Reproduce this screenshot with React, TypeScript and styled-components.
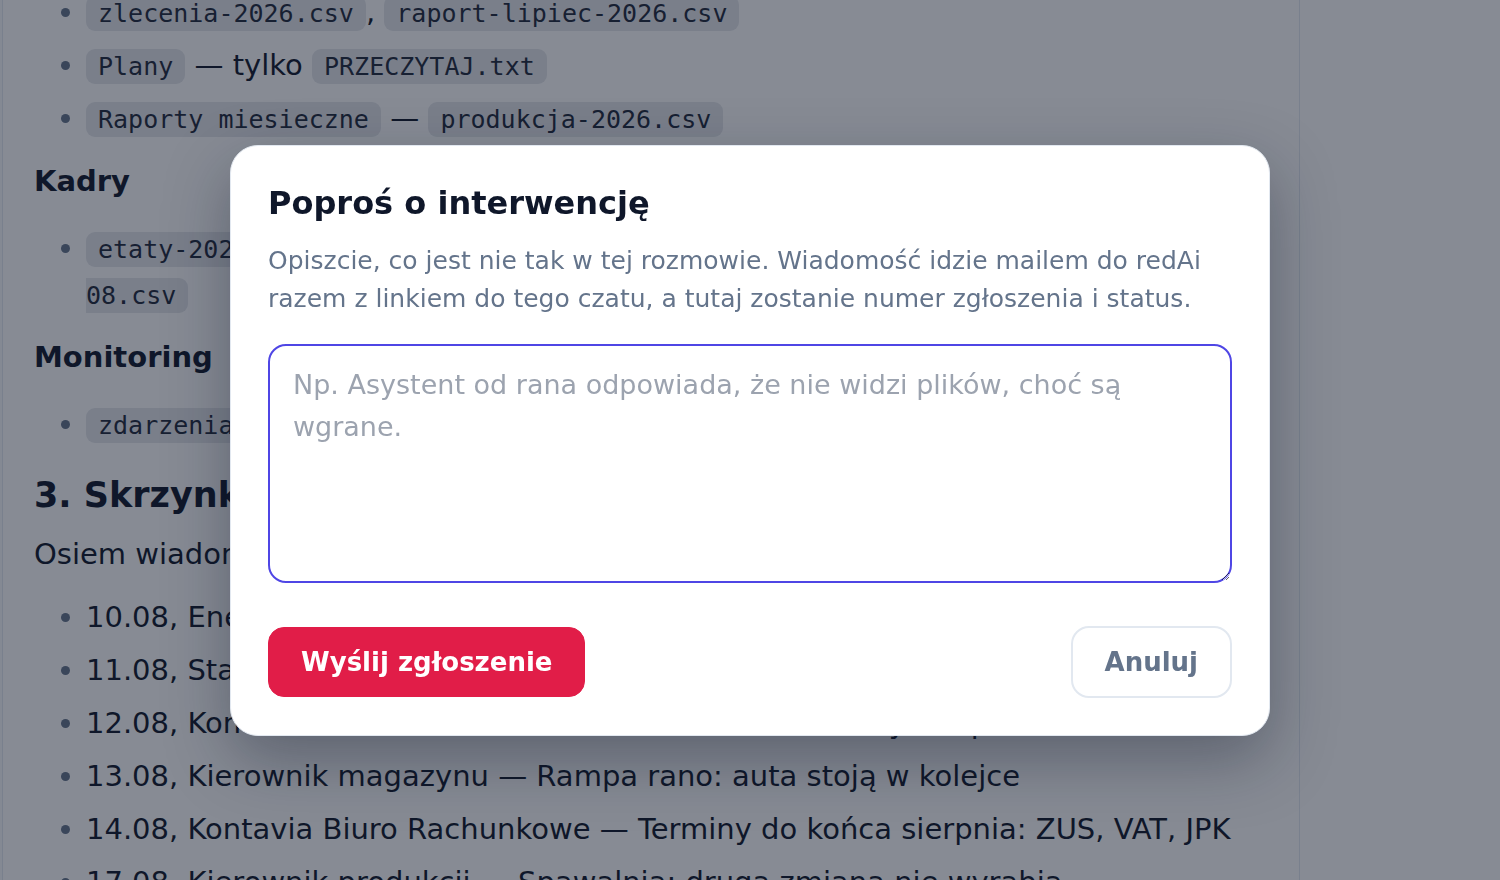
import styled, { createGlobalStyle } from 'styled-components';

const GlobalStyle = createGlobalStyle`
  html, body {
    margin: 0;
    padding: 0;
    height: 100%;
    overflow: hidden;
  }

  body {
    font-family: "DejaVu Sans", "Noto Sans", sans-serif;
    color: #0f172a;
    background: #ffffff;
  }

  * {
    box-sizing: border-box;
  }
`;

const Page = styled.div`
  display: flex;
  height: 100vh;
  overflow: hidden;
`;

const SideStrip = styled.aside`
  width: 3px;
  flex-shrink: 0;
  background: #f8fafc;
  border-right: 1px solid #e2e8f0;
`;

const Main = styled.main`
  flex: 1;
  min-width: 0;
  padding: 0 31px;
  border-right: 1px solid #e2e8f0;
  overflow: hidden;
`;

const RightPanel = styled.aside`
  width: 200px;
  flex-shrink: 0;
  background: #ffffff;
`;

// the document is scrolled a bit, so the first row sits half above the fold
const Article = styled.article`
  margin-top: -11px;
  font-size: 29px;
  line-height: 46px;
`;

const List = styled.ul`
  margin: 0;
  padding-left: 52px;

  li + li {
    margin-top: 7px;
  }

  li::marker {
    color: #64748b;
  }
`;

const Item = styled.li``;

const Code = styled.code`
  font-family: "DejaVu Sans Mono", "Liberation Mono", monospace;
  font-size: 25px;
  line-height: 1;
  color: #1e293b;
  background: #e5e7eb;
  padding: 3px 12px;
  border-radius: 9px;
`;

const SubHeading = styled.h3`
  margin: 22px 0 26px;
  font-size: 29px;
  line-height: 36px;
  font-weight: 700;
`;

const SectionHeading = styled.h2`
  margin: 26px 0 14px;
  font-size: 35px;
  line-height: 44px;
  font-weight: 700;
`;

const Paragraph = styled.p`
  margin: 0 0 17px;
`;

const Overlay = styled.div`
  position: fixed;
  inset: 0;
  display: flex;
  align-items: center;
  justify-content: center;
  background: rgba(15, 23, 42, 0.5);
`;

const Modal = styled.div`
  width: 1040px;
  padding: 37px;
  background: #ffffff;
  border: 1px solid #e2e8f0;
  border-radius: 28px;
  box-shadow: 0 24px 64px rgba(15, 23, 42, 0.35);
`;

const Title = styled.h2`
  margin: 0;
  font-size: 32px;
  line-height: 40px;
  font-weight: 700;
  color: #0f172a;
`;

const Description = styled.p`
  margin: 19px 0 0;
  font-size: 25px;
  line-height: 38px;
  color: #64748b;
`;

const TextArea = styled.textarea`
  display: block;
  width: 100%;
  height: 239px;
  margin-top: 26px;
  padding: 18px 23px;
  font-family: "DejaVu Sans", "Noto Sans", sans-serif;
  font-size: 27px;
  line-height: 42px;
  color: #0f172a;
  border: 2px solid #4f46e5;
  border-radius: 18px;
  outline: none;
  resize: vertical;

  &::placeholder {
    color: #9ca3af;
  }
`;

const Actions = styled.div`
  display: flex;
  align-items: center;
  justify-content: space-between;
  margin-top: 43px;
`;

const Button = styled.button<{ $variant: 'primary' | 'ghost' }>`
  font-family: "DejaVu Sans", "Noto Sans", sans-serif;
  font-size: 26px;
  line-height: 30px;
  font-weight: 700;
  padding: 19px 32px;
  border-radius: ${(p) => (p.$variant === 'primary' ? '16px' : '18px')};
  cursor: pointer;
  background: ${(p) => (p.$variant === 'primary' ? '#e11d48' : '#ffffff')};
  color: ${(p) => (p.$variant === 'primary' ? '#ffffff' : '#64748b')};
  border: ${(p) =>
    p.$variant === 'primary' ? '1px solid #e11d48' : '2px solid #e2e8f0'};
`;

const inbox = [
  '10.08, Energa Obrót — Faktura za energię, lipiec 2026',
  '11.08, Starostwo Powiatowe — Decyzja w sprawie pozwolenia',
  '12.08, Kontrahent Metalex — Zmiana terminów dostawy i to pilne',
  '13.08, Kierownik magazynu — Rampa rano: auta stoją w kolejce',
  '14.08, Kontavia Biuro Rachunkowe — Terminy do końca sierpnia: ZUS, VAT, JPK',
  '17.08, Kierownik produkcji — Spawalnia: druga zmiana nie wyrabia',
];

const App = () => {
  return (
    <>
      <GlobalStyle />
      <Page>
        <SideStrip />
        <Main>
          <Article>
            <List>
              <Item>
                <Code>zlecenia-2026.csv</Code>, <Code>raport-lipiec-2026.csv</Code>
              </Item>
              <Item>
                <Code>Plany</Code> — tylko <Code>PRZECZYTAJ.txt</Code>
              </Item>
              <Item>
                <Code>Raporty miesieczne</Code> — <Code>produkcja-2026.csv</Code>
              </Item>
            </List>

            <SubHeading>Kadry</SubHeading>
            <List>
              <Item>
                <Code>etaty-2026.csv</Code>, <Code>umowy-zlecenia-2026.csv</Code>,{' '}
                <Code>urlopy-2026.csv</Code>,{' '}
                <Code>
                  godziny-2026-<wbr />08.csv
                </Code>
              </Item>
            </List>

            <SubHeading>Monitoring</SubHeading>
            <List>
              <Item>
                <Code>zdarzenia-2026-08.csv</Code>
              </Item>
            </List>

            <SectionHeading>3. Skrzynka odbiorcza</SectionHeading>
            <Paragraph>Osiem wiadomości z ostatnich dni, od najstarszej:</Paragraph>
            <List>
              {inbox.map((line) => (
                <Item key={line}>{line}</Item>
              ))}
            </List>
          </Article>
        </Main>
        <RightPanel />
      </Page>

      <Overlay>
        <Modal>
          <Title>Poproś o interwencję</Title>
          <Description>
            Opiszcie, co jest nie tak w tej rozmowie. Wiadomość idzie mailem do redAi
            razem z linkiem do tego czatu, a tutaj zostanie numer zgłoszenia i status.
          </Description>
          <TextArea placeholder="Np. Asystent od rana odpowiada, że nie widzi plików, choć są wgrane." />
          <Actions>
            <Button $variant="primary">Wyślij zgłoszenie</Button>
            <Button $variant="ghost">Anuluj</Button>
          </Actions>
        </Modal>
      </Overlay>
    </>
  );
};

export default App;
